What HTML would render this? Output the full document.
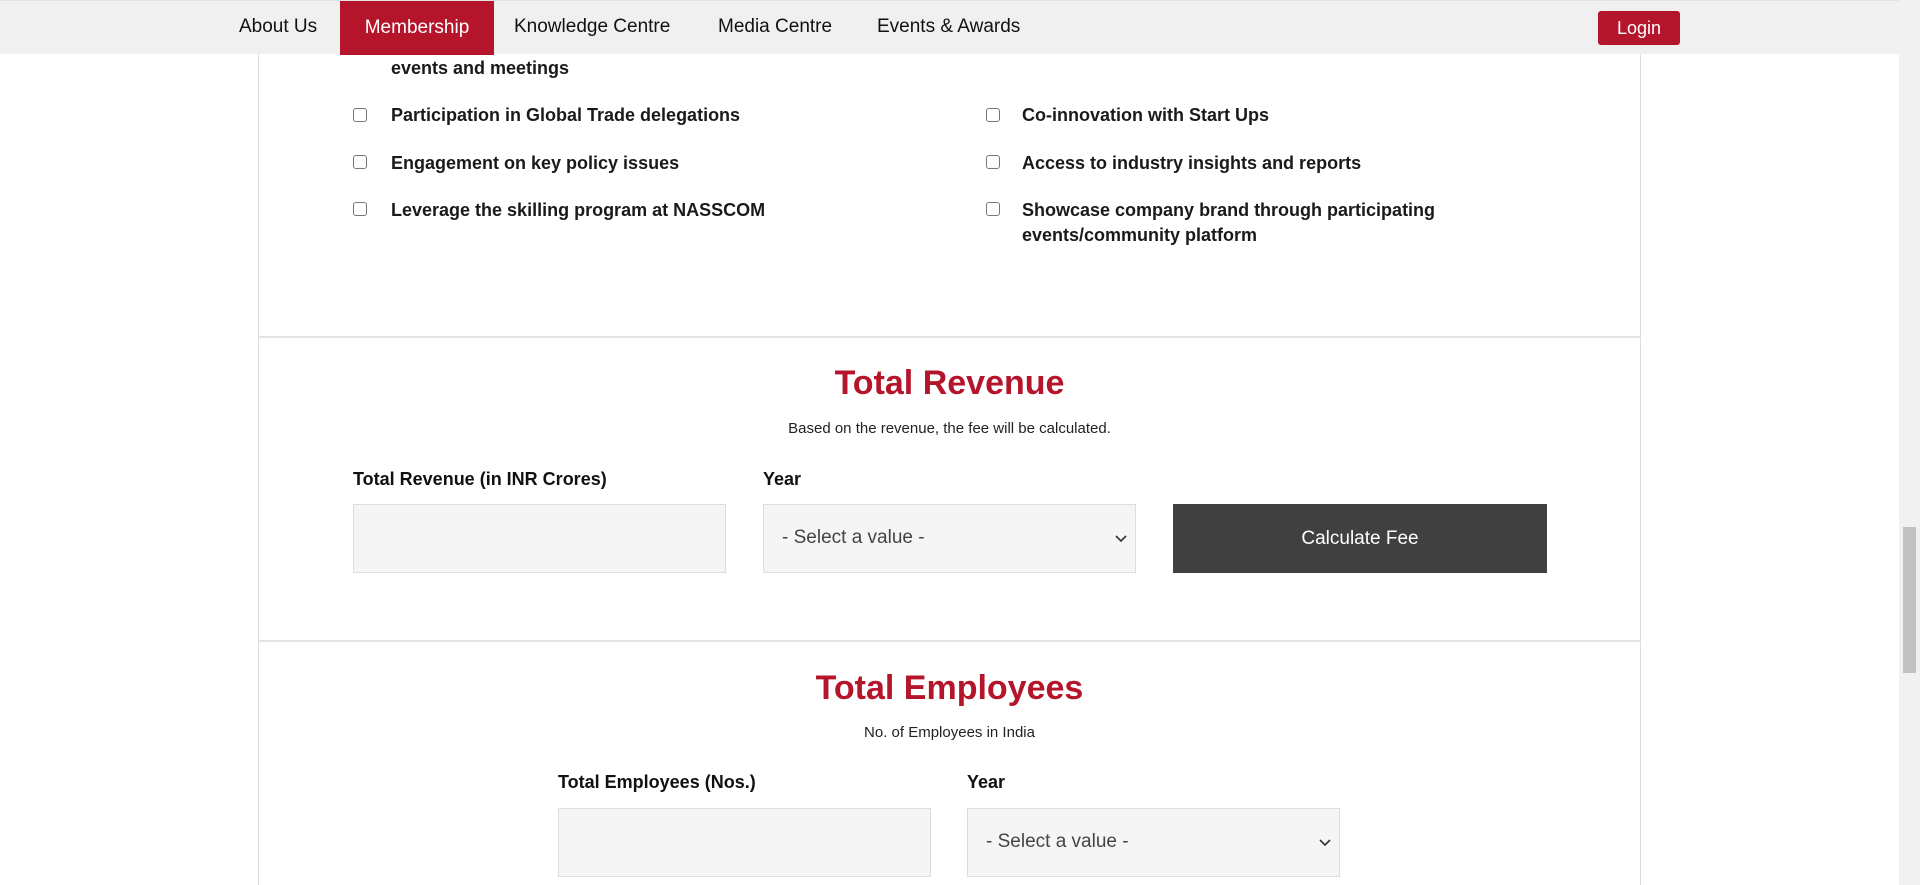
<!DOCTYPE html>
<html><head><meta charset="utf-8"><style>
*{box-sizing:border-box;margin:0;padding:0}
body{width:1920px;height:885px;overflow:hidden;background:#fff;font-family:"Liberation Sans",Arial,sans-serif;color:#111;position:relative}
.nav{position:absolute;left:0;top:0;width:1899px;height:54px;background:#f0f0f0;border-top:1px solid #e2e2e2}
.nav span{position:absolute;top:15px;font-size:19px;color:#111}
.nav .act{left:340px;top:0;width:154px;height:54px;background:#b5152b;color:#fff;text-align:center;line-height:54px}
.login{position:absolute;left:1598px;top:10px;width:82px;height:34px;background:#b5152b;color:#fff;border-radius:3px;font-size:18px;text-align:center;line-height:34px}
.card{position:absolute;left:258px;top:54px;width:1383px;height:831px;border-left:1px solid #ddd;border-right:1px solid #ddd}
.t{position:absolute;font-size:18px;font-weight:bold;color:#1a1a1a;line-height:25px}
.cb{position:absolute;width:14px;height:14px;border:1px solid #777;border-radius:3px;background:#fff}
.hr{position:absolute;left:258px;width:1383px;height:2px;background:#e4e4e4}
h2{position:absolute;left:258px;width:1383px;text-align:center;color:#b5152b;font-size:34px;font-weight:bold}
.sub{position:absolute;left:258px;width:1383px;text-align:center;font-size:15px;color:#222}
.lab{position:absolute;font-size:18px;font-weight:bold}
.box{position:absolute;height:69px;width:373px;background:#f5f5f5;border:1px solid #ddd}
.sel{font-size:19px;color:#444;padding:22px 0 0 18px}
.sel svg{position:absolute;right:8px;top:30px}
.btn{position:absolute;left:1173px;top:504px;width:374px;height:69px;background:#404040;color:#fff;font-size:19px;text-align:center;line-height:69px}
.sb{position:absolute;right:0;top:0;width:21px;height:885px;background:#f1f1f1}
.sb div{position:absolute;left:4px;top:527px;width:13px;height:146px;background:#c1c1c1}
</style></head><body>
<div class="nav">
<span style="left:239px">About Us</span>
<span class="act">Membership</span>
<span style="left:514px">Knowledge Centre</span>
<span style="left:718px">Media Centre</span>
<span style="left:877px">Events &amp; Awards</span>
<div class="login">Login</div>
</div>
<div class="card"></div>
<div class="t" style="left:391px;top:56px">events and meetings</div>
<div class="cb" style="left:353px;top:108px"></div><div class="t" style="left:391px;top:103px">Participation in Global Trade delegations</div>
<div class="cb" style="left:353px;top:155px"></div><div class="t" style="left:391px;top:151px">Engagement on key policy issues</div>
<div class="cb" style="left:353px;top:202px"></div><div class="t" style="left:391px;top:198px">Leverage the skilling program at NASSCOM</div>
<div class="cb" style="left:986px;top:108px"></div><div class="t" style="left:1022px;top:103px">Co-innovation with Start Ups</div>
<div class="cb" style="left:986px;top:155px"></div><div class="t" style="left:1022px;top:151px">Access to industry insights and reports</div>
<div class="cb" style="left:986px;top:202px"></div><div class="t" style="left:1022px;top:198px">Showcase company brand through participating<br>events/community platform</div>
<div class="hr" style="top:336px"></div>
<h2 style="top:364px">Total Revenue</h2>
<div class="sub" style="top:420px">Based on the revenue, the fee will be calculated.</div>
<div class="lab" style="left:353px;top:469px">Total Revenue (in INR Crores)</div>
<div class="lab" style="left:763px;top:469px">Year</div>
<div class="box" style="left:353px;top:504px"></div>
<div class="box sel" style="left:763px;top:504px">- Select a value -<svg width="12" height="8" viewBox="0 0 12 8"><path d="M1 1l5 5 5-5" fill="none" stroke="#333" stroke-width="1.6"/></svg></div>
<div class="btn">Calculate Fee</div>
<div class="hr" style="top:640px"></div>
<h2 style="top:669px">Total Employees</h2>
<div class="sub" style="top:724px">No. of Employees in India</div>
<div class="lab" style="left:558px;top:772px">Total Employees (Nos.)</div>
<div class="lab" style="left:967px;top:772px">Year</div>
<div class="box" style="left:558px;top:808px"></div>
<div class="box sel" style="left:967px;top:808px">- Select a value -<svg width="12" height="8" viewBox="0 0 12 8"><path d="M1 1l5 5 5-5" fill="none" stroke="#333" stroke-width="1.6"/></svg></div>
<div class="sb"><div></div></div>
</body></html>
